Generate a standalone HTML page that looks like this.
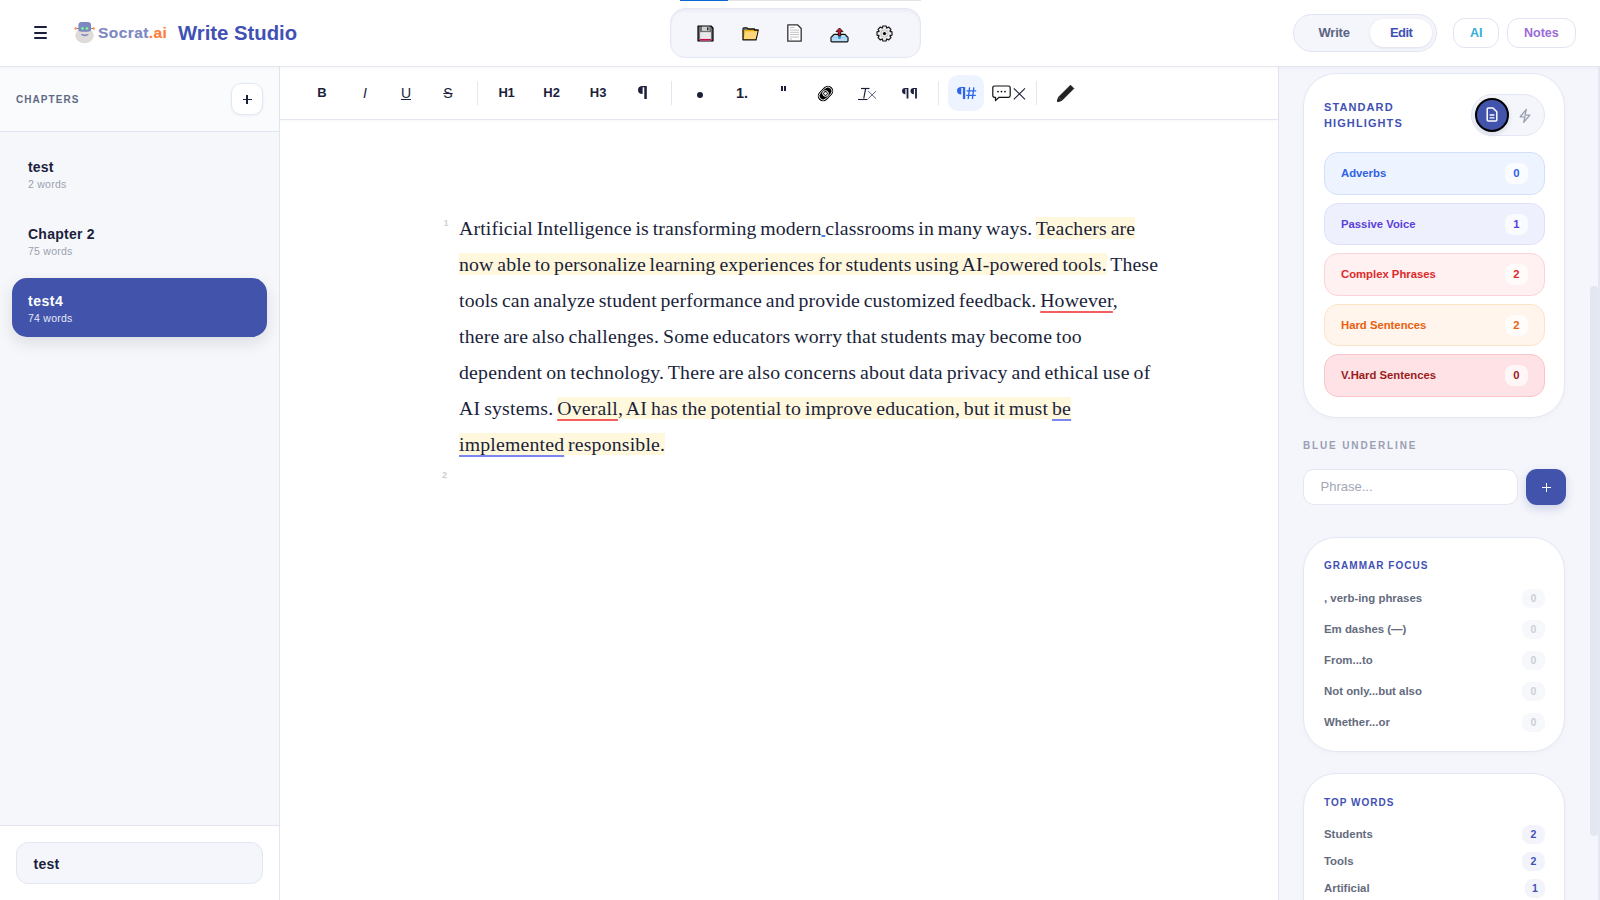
<!DOCTYPE html>
<html><head><meta charset="utf-8">
<style>
*{box-sizing:border-box;margin:0;padding:0}
html,body{width:1600px;height:900px;overflow:hidden;background:#fff;font-family:"Liberation Sans",sans-serif;color:#1b1f3b}
.a{position:absolute}
.t{position:absolute;white-space:nowrap;line-height:1}
/* header */
#hdr{position:absolute;left:0;top:0;width:1600px;height:67px;background:#fff;border-bottom:1px solid #e3e6f2;box-shadow:0 1px 4px rgba(40,40,30,.045);z-index:3}
/* sidebar */
#side{position:absolute;left:0;top:67px;width:280px;height:833px;background:#f6f7fb;border-right:1px solid #e3e6f2}
#sidehd{position:absolute;left:0;top:0;width:279px;height:65px;background:#fafbfd;border-bottom:1px solid #e3e6f2}
#sidebot{position:absolute;left:0;top:758px;width:279px;height:75px;background:#fff;border-top:1px solid #e3e6f2}
/* editor */
#tb{position:absolute;left:280px;top:67px;width:998px;height:53px;background:#fff;border-bottom:1px solid #e3e6f2;box-shadow:0 1px 3px rgba(40,40,20,.04);z-index:2}
.btn{position:absolute;top:7.8px;height:36px;width:36px;display:flex;align-items:center;justify-content:center;font-weight:bold;font-size:13px;color:#1b1f3b}
.sep{position:absolute;top:14px;width:1px;height:24px;background:#e3e6ef}
#doc{position:absolute;left:280px;top:120px;width:998px;height:780px;background:#fff}
.ln{position:absolute;left:179px;margin-top:-0.7px;word-spacing:-1.3px;white-space:nowrap;font-family:"Liberation Serif",serif;font-size:19.8px;line-height:22px;color:#1b1f3b}
.hl{background:#fff8dc}
.ur{text-decoration:underline;text-decoration-color:#f25f5f;text-decoration-thickness:2px;text-underline-offset:4px;text-decoration-skip-ink:none}
.ub{text-decoration:underline;text-decoration-color:#7b86f0;text-decoration-thickness:2px;text-underline-offset:4px;text-decoration-skip-ink:none}
/* right */
#rp{position:absolute;left:1278px;top:67px;width:322px;height:833px;background:#f5f6fb;border-left:1px solid #e3e6f2}
.card{position:absolute;background:#fff;border:1px solid #e3e6f3;border-radius:33px;box-shadow:0 2px 6px rgba(30,30,60,.025)}
.pill{position:absolute;left:20px;width:221px;height:43px;border-radius:14px;border:1px solid}
.pill .lb{position:absolute;left:16px;top:14px;font-size:11.3px;font-weight:bold;line-height:13px;white-space:nowrap}
.pill .ct{position:absolute;right:16px;top:10px;height:21px;min-width:23px;padding:0 6px;border-radius:8px;background:rgba(255,255,255,.7);font-size:11.3px;font-weight:bold;line-height:21px;text-align:center}
.ghd{position:absolute;left:20px;font-size:10px;font-weight:bold;letter-spacing:1.03px;color:#3f51b5;line-height:12px;white-space:nowrap}
.row{position:absolute;left:20px;width:221px;height:19px}
.row .lb{position:absolute;left:0;top:2px;font-size:11.4px;font-weight:bold;color:#646b7e;line-height:13px;white-space:nowrap}
.row .ct{position:absolute;right:0;top:-0.6px;height:19px;min-width:23px;border-radius:8px;background:#f7f8fb;font-size:10.5px;font-weight:bold;color:#cbcfd9;line-height:19px;text-align:center}
</style></head><body>

<div id="hdr">
  <!-- hamburger -->
  <div class="a" style="left:33.5px;top:26px;width:13px;height:2px;background:#1b1f3b;border-radius:1px"></div>
  <div class="a" style="left:33.5px;top:31.5px;width:13px;height:2px;background:#1b1f3b;border-radius:1px"></div>
  <div class="a" style="left:33.5px;top:37px;width:13px;height:2px;background:#1b1f3b;border-radius:1px"></div>
  <!-- robot logo -->
  <svg class="a" style="left:74px;top:20px" width="22" height="25" viewBox="0 0 22 25">
    <ellipse cx="10.5" cy="15.5" rx="9.3" ry="7.7" fill="#dedbd8"/>
    <path d="M4.4 4.8 Q4.4 1.9 7.6 1.9 L13.8 1.9 Q17 1.9 17 4.8 L17 9.6 Q17 11.8 13.5 11.8 L8 11.8 Q4.4 11.8 4.4 9.6 Z" fill="#7d87c2"/>
    <circle cx="8.5" cy="8.4" r="1.55" fill="#5ee08a"/>
    <circle cx="13" cy="8.4" r="1.55" fill="#5ee08a"/>
    <circle cx="8.5" cy="8.4" r="0.7" fill="#c8f7d6"/>
    <circle cx="13" cy="8.4" r="0.7" fill="#c8f7d6"/>
    <path d="M7.2 14.5 Q10.7 17.2 14.3 14.5 Q10.7 15.3 7.2 14.5Z" fill="#7d87c2" stroke="#7d87c2" stroke-width="0.8"/>
    <path d="M2.5 8.5 H4.5 M16.9 8.5 H19" stroke="#555a80" stroke-width="0.8"/>
    <circle cx="1.6" cy="8.5" r="1.2" fill="#ff8a4a"/>
    <circle cx="19.7" cy="8.5" r="1.2" fill="#ff8a4a"/>
  </svg>
  <div class="t" style="left:98px;top:25px;font-size:15.5px;font-weight:bold;color:#7d88c3;letter-spacing:0.42px;-webkit-text-stroke:0.15px #7d88c3">Socrat<span style="color:#ff7d3b;-webkit-text-stroke:0.15px #ff7d3b">.ai</span></div>
  <div class="t" style="left:178px;top:22.5px;font-size:20.3px;font-weight:bold;color:#3f51b5">Write Studio</div>
  <!-- progress bar -->
  <div class="a" style="left:680px;top:0;width:241px;height:1px;background:#e3e3e3"></div>
  <div class="a" style="left:680px;top:0;width:48px;height:1px;background:#0a66d0"></div>
  <!-- file pill -->
  <div class="a" style="left:670px;top:8px;width:251px;height:50px;background:#f5f6fb;border:1px solid #e3e6f3;border-radius:15px;box-shadow:inset 0 2px 3px rgba(30,40,90,.05)"></div>
  <!-- save -->
  <svg class="a" style="left:697px;top:25px" width="17" height="17" viewBox="0 0 17 17">
    <path d="M1 1 H14 L16 3 V16 H1 Z" fill="#707070" stroke="#000" stroke-width="1.2" stroke-linejoin="round"/>
    <rect x="5" y="1.7" width="7.4" height="4.2" fill="#d0d0d0"/><rect x="10" y="2.4" width="1.5" height="2.8" fill="#222"/>
    <rect x="3.1" y="7.2" width="10.8" height="8.3" fill="#eeeeee"/>
    <path d="M3.1 9.5 H13.9 M3.1 11.5 H13.9" stroke="#dadada" stroke-width="0.5"/>
    <rect x="3.1" y="13.9" width="10.8" height="1.7" fill="#c8104e"/>
  </svg>
  <!-- folder -->
  <svg class="a" style="left:742px;top:27px" width="17" height="14" viewBox="0 0 17 14">
    <path d="M1 2 Q1 1 2 1 L5 1 L6 2 L12.5 2 L12.5 3 L16.2 3 L14 12.8 L1 12.8 Z" fill="#f2a80f" stroke="#111" stroke-width="1.3" stroke-linejoin="round"/>
    <path d="M3 4.2 L15.6 4.2 L13.6 12 L1.8 12 Z" fill="#ffd77a"/>
    <rect x="1.6" y="1.6" width="3" height="1.4" fill="#3a7bbf"/>
  </svg>
  <!-- document -->
  <svg class="a" style="left:787px;top:24px" width="15" height="18" viewBox="0 0 15 18">
    <path d="M0.8 0.8 H10.5 L14.2 4.5 V17.2 H0.8 Z" fill="#fff" stroke="#333" stroke-width="1.3" stroke-linejoin="round"/>
    <g stroke="#bbb" stroke-width="0.9"><line x1="3" y1="3.5" x2="7.5" y2="3.5"/><line x1="3" y1="6" x2="12" y2="6"/><line x1="3" y1="8.3" x2="12" y2="8.3"/><line x1="3" y1="10.5" x2="12" y2="10.5"/><line x1="3" y1="13" x2="12" y2="13"/><line x1="3" y1="15" x2="5" y2="15"/></g>
  </svg>
  <!-- upload tray -->
  <svg class="a" style="left:829.5px;top:27px" width="19" height="16" viewBox="0 0 19 16">
    <path d="M1 10.5 L4 7.3 H15 L18 10.5 V13.8 Q18 14.8 17 14.8 H2 Q1 14.8 1 13.8 Z" fill="#b5dcf6" stroke="#111" stroke-width="1.2" stroke-linejoin="round"/>
    <path d="M1.6 10.6 H17.4" stroke="#8ec8ee" stroke-width="0.7"/>
    <circle cx="9.5" cy="10.4" r="1.5" fill="#3b96e0"/>
    <path d="M9.5 1 L13 4.6 L10.7 4.6 L10.7 9 L8.3 9 L8.3 4.6 L6 4.6 Z" fill="#e0102a" stroke="#111" stroke-width="0.9" stroke-linejoin="round"/>
  </svg>
  <!-- gear -->
  <svg class="a" style="left:876px;top:25px" width="17" height="17" viewBox="0 0 17 17">
    <path d="M13.99 6.35 L16.02 6.85 L16.02 10.15 L13.99 10.65 L13.91 10.86 L14.99 12.65 L12.65 14.99 L10.86 13.91 L10.65 13.99 L10.15 16.02 L6.85 16.02 L6.35 13.99 L6.14 13.91 L4.35 14.99 L2.01 12.65 L3.09 10.86 L3.01 10.65 L0.98 10.15 L0.98 6.85 L3.01 6.35 L3.09 6.14 L2.01 4.35 L4.35 2.01 L6.14 3.09 L6.35 3.01 L6.85 0.98 L10.15 0.98 L10.65 3.01 L10.86 3.09 L12.65 2.01 L14.99 4.35 L13.91 6.14 Z" fill="#e9e9e9" stroke="#111" stroke-width="1.1" stroke-linejoin="round"/>
    <circle cx="8.5" cy="8.5" r="3.7" fill="none" stroke="#b5b5b5" stroke-width="0.7"/>
    <circle cx="8.5" cy="8.5" r="2.6" fill="none" stroke="#d0d0d0" stroke-width="0.5"/>
    <circle cx="8.5" cy="8.5" r="1.6" fill="#000"/>
  </svg>
  <!-- write/edit toggle -->
  <div class="a" style="left:1293px;top:14px;width:144px;height:38px;background:#f5f6fb;border:1px solid #e0e4f3;border-radius:19px"></div>
  <div class="a" style="left:1370px;top:19px;width:62px;height:28px;background:#fff;border-radius:14px;box-shadow:0 1px 3px rgba(30,40,90,.10)"></div>
  <div class="t" style="left:1318.5px;top:26px;font-size:13px;font-weight:bold;color:#5a6582;letter-spacing:-.2px">Write</div>
  <div class="t" style="left:1390px;top:26px;font-size:13px;font-weight:bold;color:#3f51b5;letter-spacing:-.6px">Edit</div>
  <!-- AI / Notes -->
  <div class="a" style="left:1453px;top:18px;width:46px;height:30px;background:#fff;border:1px solid #e0e4f3;border-radius:12px"></div>
  <div class="t" style="left:1470px;top:27px;font-size:12.5px;font-weight:bold;color:#36aed6">AI</div>
  <div class="a" style="left:1507px;top:18px;width:69px;height:30px;background:#fff;border:1px solid #e0e4f3;border-radius:12px"></div>
  <div class="t" style="left:1524px;top:27px;font-size:12.5px;font-weight:bold;color:#9a6bd9">Notes</div>
</div>
<div id="side">
  <div id="sidehd">
    <div class="t" style="left:16px;top:28px;font-size:10px;font-weight:bold;letter-spacing:1.05px;color:#5f6a85">CHAPTERS</div>
    <div class="a" style="left:231px;top:16px;width:32px;height:32px;background:#fff;border:1px solid #e3e6f3;border-radius:10px;box-shadow:0 1px 3px rgba(30,40,90,.06)"></div>
    <div class="a" style="left:242.5px;top:31.5px;width:9px;height:1.3px;background:#1b1f3b"></div>
    <div class="a" style="left:246.4px;top:27.6px;width:1.3px;height:9px;background:#1b1f3b"></div>
  </div>
  <div class="t" style="left:28px;top:92.5px;font-size:14px;font-weight:bold;color:#1b1f3b;letter-spacing:.2px">test</div>
  <div class="t" style="left:28px;top:111.5px;font-size:10.5px;color:#9aa1b1;letter-spacing:.25px">2 words</div>
  <div class="t" style="left:28px;top:159.5px;font-size:14px;font-weight:bold;color:#1b1f3b;letter-spacing:.25px">Chapter 2</div>
  <div class="t" style="left:28px;top:178.5px;font-size:10.5px;color:#9aa1b1;letter-spacing:.25px">75 words</div>
  <div class="a" style="left:12px;top:211px;width:255px;height:59px;background:#4153aa;border-radius:15px;box-shadow:0 6px 16px rgba(20,20,30,.11)"></div>
  <div class="t" style="left:28px;top:226.5px;font-size:14px;font-weight:bold;color:#fff;letter-spacing:.5px">test4</div>
  <div class="t" style="left:28px;top:245.5px;font-size:10.5px;color:#e6e9f7;letter-spacing:.25px">74 words</div>
  <div id="sidebot">
    <div class="a" style="left:16px;top:16px;width:247px;height:42px;background:#f5f6fb;border:1px solid #e3e6f3;border-radius:12px"></div>
    <div class="t" style="left:33.5px;top:30.5px;font-size:14px;font-weight:bold;color:#1b1f3b;letter-spacing:.25px">test</div>
  </div>
</div>
<div id="tb">
  <div class="btn" style="left:24px">B</div>
  <div class="btn" style="left:67px;font-weight:normal;font-style:italic;font-size:14px">I</div>
  <div class="btn" style="left:108px;font-weight:normal;text-decoration:underline;font-size:14px">U</div>
  <div class="btn" style="left:150px;font-weight:normal;text-decoration:line-through;font-size:14px">S</div>
  <div class="sep" style="left:196.5px"></div>
  <div class="btn" style="left:206.5px;width:40px;letter-spacing:-0.3px">H1</div>
  <div class="btn" style="left:251.6px;width:40px">H2</div>
  <div class="btn" style="left:298.1px;width:40px">H3</div>
  <svg class="a" style="left:358px;top:19px" width="9" height="13" viewBox="0 0 9 13"><path d="M4.6 0 H8.8 V13 H6.3 V1.2 H4.6 V8 Q0 8 0 4 Q0 0 4.6 0 Z" fill="#1b1f3b"/></svg>
  <div class="sep" style="left:390.5px"></div>
  <div class="a" style="left:416.5px;top:24.5px;width:6px;height:6px;border-radius:50%;background:#1b1f3b"></div>
  <div class="t" style="left:456px;top:18.7px;font-size:14.5px;font-weight:bold;color:#1b1f3b">1.</div>
  <div class="a" style="left:500.8px;top:18.9px;width:2px;height:5.2px;background:#1b1f3b"></div><div class="a" style="left:504.4px;top:18.9px;width:2px;height:5.2px;background:#1b1f3b"></div>
  <!-- link -->
  <svg class="a" style="left:536.5px;top:17.5px;overflow:visible" width="17" height="17" viewBox="0 0 17 17">
    <g transform="rotate(-45 8.5 8.5)">
      <rect x="-0.2" y="3.2" width="17.4" height="10.6" rx="5.3" fill="#000"/>
      <rect x="1.1" y="4.5" width="14.8" height="8" rx="4" fill="none" stroke="#fff" stroke-width="0.9"/>
      <circle cx="8.5" cy="8.5" r="3.1" fill="#fff"/>
      <circle cx="8.5" cy="8.5" r="2.25" fill="#000"/>
      <circle cx="8.5" cy="8.5" r="1.4" fill="#fff"/>
    </g>
  </svg>
  <!-- Tx -->
  <svg class="a" style="left:577px;top:20px" width="20" height="14" viewBox="0 0 20 14">
    <path d="M4 1.5 H12.5" stroke="#1b1f3b" stroke-width="1.2"/>
    <path d="M8.6 1.5 L6.8 11.5" stroke="#1b1f3b" stroke-width="1.2"/>
    <path d="M1 12.5 H10.5" stroke="#1b1f3b" stroke-width="1.1"/>
    <path d="M11.2 4.2 L19 11.6 M19 4.2 L11.2 11.6" stroke="#4a5278" stroke-width="0.9"/>
  </svg>
  <svg class="a" style="left:621.8px;top:20.6px" width="16" height="11" viewBox="0 0 16 11"><path d="M3.4 0 H6.4 V10.4 H4.6 V1 H3.4 V6.2 Q0 6.2 0 3.1 Q0 0 3.4 0 Z" fill="#1b1f3b"/><path d="M11.9 0 H14.9 V10.4 H13.1 V1 H11.9 V6.2 Q8.5 6.2 8.5 3.1 Q8.5 0 11.9 0 Z" fill="#1b1f3b"/></svg>
  <div class="sep" style="left:657.5px"></div>
  <div class="a" style="left:668px;top:8px;width:36px;height:36px;border-radius:10px;background:#eef4ff"></div>
  <svg class="a" style="left:677px;top:19.7px" width="20" height="13" viewBox="0 0 20 13"><path d="M4.3 0 H8.2 V12 H5.9 V1.1 H4.3 V7.4 Q0 7.4 0 3.7 Q0 0 4.3 0 Z" fill="#2f66e8"/><path d="M12.6 0.3 L11.2 12 M16.8 0.3 L15.4 12 M9.6 3.9 H19.2 M9.2 8.3 H18.8" stroke="#2f66e8" stroke-width="1.35"/></svg>
  <!-- comment x -->
  <svg class="a" style="left:712px;top:18px" width="35" height="18" viewBox="0 0 35 18">
    <path d="M2.5 1 H16.5 Q18.2 1 18.2 2.7 V10.6 Q18.2 12.3 16.5 12.3 H7 L3.5 15.6 V12.3 H2.5 Q0.8 12.3 0.8 10.6 V2.7 Q0.8 1 2.5 1 Z" fill="#fff" stroke="#111" stroke-width="1.2" stroke-linejoin="round"/>
    <circle cx="6" cy="6.6" r="0.9" fill="#111"/><circle cx="9.5" cy="6.6" r="0.9" fill="#111"/><circle cx="13" cy="6.6" r="0.9" fill="#111"/>
    <path d="M21.8 3.4 L33 14.4 M33 3.4 L21.8 14.4" stroke="#1b1f3b" stroke-width="1.1"/>
  </svg>
  <div class="sep" style="left:756px"></div>
  <!-- pen -->
  <svg class="a" style="left:776px;top:17px" width="19" height="19" viewBox="0 0 19 19">
    <path d="M14.5 1.2 L17.8 4.5 L6 16.3 Q3 17.8 1.4 17.6 Q1.2 16 2.7 13 Z" fill="#222" stroke="#111" stroke-width="0.8" stroke-linejoin="round"/>
    <path d="M2.6 13.2 L5.8 16.4" stroke="#666" stroke-width="0.7"/>
  </svg>
</div>
<div id="doc">
  <div class="t" style="left:163.8px;top:99px;font-size:8.5px;font-weight:bold;color:#cfcfcf">1</div>
  <div class="ln" style="top:97.5px;letter-spacing:0.136px">Artificial Intelligence is transforming modern<span class="ub" style="text-decoration-color:#3f7ff0;text-decoration-thickness:1.5px;text-underline-offset:0px">&nbsp;</span>classrooms in many ways. <span class="hl">Teachers are</span></div>
  <div class="ln" style="top:133.5px;letter-spacing:0.148px"><span class="hl">now able to personalize learning experiences for students using AI-powered tools.</span> These</div>
  <div class="ln" style="top:169.5px;letter-spacing:0.135px">tools can analyze student performance and provide customized feedback. <span class="ur">However</span>,</div>
  <div class="ln" style="top:205.5px;letter-spacing:0.202px">there are also challenges. Some educators worry that students may become too</div>
  <div class="ln" style="top:241.5px;letter-spacing:0.222px">dependent on technology. There are also concerns about data privacy and ethical use of</div>
  <div class="ln" style="top:277.5px;letter-spacing:0.203px">AI systems. <span class="hl"><span class="ur">Overall</span>, AI has the potential to improve education, but it must <span class="ub">be</span></span></div>
  <div class="ln" style="top:313.5px;letter-spacing:0.175px"><span class="hl"><span class="ub">implemented</span> responsible.</span></div>
  <div class="t" style="left:162px;top:351px;font-size:9px;font-weight:bold;color:#cdcdcd">2</div>
</div>
<div id="rp">
  <div class="card" style="left:24px;top:6px;width:262px;height:345px">
    <div class="t" style="left:20px;top:25.3px;font-size:11px;font-weight:bold;letter-spacing:1.1px;color:#3f51b5;line-height:16px">STANDARD<br>HIGHLIGHTS</div>
    <div class="a" style="left:167px;top:20px;width:74px;height:42px;border-radius:21px;background:#f5f6fb;border:1px solid #e3e6f3"></div>
    <div class="a" style="left:171px;top:23.5px;width:34px;height:34px;border-radius:50%;background:#4153aa;border:2px solid #000;box-shadow:0 2px 5px rgba(30,40,90,.15)"></div>
    <svg class="a" style="left:182px;top:33px" width="12" height="15" viewBox="0 0 12 15">
      <path d="M1.2 2 Q1.2 1 2.2 1 H7 L10.8 4.8 V13 Q10.8 14 9.8 14 H2.2 Q1.2 14 1.2 13 Z" fill="none" stroke="#fff" stroke-width="1.5" stroke-linejoin="round"/>
      <path d="M3.6 8 H8.4 M3.6 10.8 H8.4" stroke="#fff" stroke-width="1.3"/>
    </svg>
    <svg class="a" style="left:213.5px;top:33.5px" width="14" height="16" viewBox="0 0 14 16">
      <path d="M8.3 1.4 L2.2 8.8 H7 L5.7 14.4 L11.8 7.1 H7 Z" fill="none" stroke="#9aa0b0" stroke-width="1.35" stroke-linejoin="round"/>
    </svg>
    <div class="pill" style="top:78px;height:43px;background:#eef4ff;border-color:#d3e0fb"><span class="lb" style="color:#2f62e6">Adverbs</span><span class="ct" style="color:#2f62e6">0</span></div>
    <div class="pill" style="top:129px;height:42px;background:#eef0fd;border-color:#dde2fa"><span class="lb" style="color:#5a3fd8">Passive Voice</span><span class="ct" style="color:#5a3fd8">1</span></div>
    <div class="pill" style="top:179px;height:43px;background:#fff0f2;border-color:#fbd3d8"><span class="lb" style="color:#dc2a2a">Complex Phrases</span><span class="ct" style="color:#dc2a2a">2</span></div>
    <div class="pill" style="top:230px;height:42px;background:#fff5ec;border-color:#fde3c6"><span class="lb" style="color:#e8600f">Hard Sentences</span><span class="ct" style="color:#e8600f">2</span></div>
    <div class="pill" style="top:280px;height:43px;background:#fee2e5;border-color:#f9c4ca"><span class="lb" style="color:#9b1c1c">V.Hard Sentences</span><span class="ct" style="color:#9b1c1c">0</span></div>
  </div>
  <div class="t" style="left:24px;top:374px;font-size:10px;font-weight:bold;letter-spacing:1.85px;color:#9aa0b3">BLUE UNDERLINE</div>
  <div class="a" style="left:24px;top:402px;width:215px;height:36px;background:#fff;border:1px solid #e3e6f3;border-radius:11px"></div>
  <div class="t" style="left:41.5px;top:413.2px;font-size:13px;color:#a2a7b8">Phrase...</div>
  <div class="a" style="left:247px;top:402px;width:40px;height:36px;background:#4153aa;border-radius:11px;box-shadow:0 4px 10px rgba(65,83,170,.22)"></div>
  <div class="a" style="left:263.2px;top:419.6px;width:8.6px;height:1.4px;background:#fff"></div>
  <div class="a" style="left:266.8px;top:416px;width:1.4px;height:8.6px;background:#fff"></div>
  <div class="card" style="left:24px;top:470px;width:262px;height:215px">
    <div class="ghd" style="top:22px">GRAMMAR FOCUS</div>
    <div class="row" style="top:51.5px"><span class="lb">, verb-ing phrases</span><span class="ct">0</span></div>
    <div class="row" style="top:82.5px"><span class="lb">Em dashes (—)</span><span class="ct">0</span></div>
    <div class="row" style="top:113.5px"><span class="lb">From...to</span><span class="ct">0</span></div>
    <div class="row" style="top:144.5px"><span class="lb">Not only...but also</span><span class="ct">0</span></div>
    <div class="row" style="top:175.5px"><span class="lb">Whether...or</span><span class="ct">0</span></div>
  </div>
  <div class="card" style="left:24px;top:706px;width:262px;height:240px">
    <div class="ghd" style="top:22.5px">TOP WORDS</div>
    <div class="row" style="top:51.5px"><span class="lb">Students</span><span class="ct" style="background:#f3f4fb;color:#3f51b5">2</span></div>
    <div class="row" style="top:78.5px"><span class="lb">Tools</span><span class="ct" style="background:#f3f4fb;color:#3f51b5">2</span></div>
    <div class="row" style="top:105.5px"><span class="lb">Artificial</span><span class="ct" style="background:#f3f4fb;color:#3f51b5;min-width:20px">1</span></div>
  </div>
  <div class="a" style="left:311px;top:219px;width:8px;height:550px;border-radius:4px;background:#e2e7f0"></div>
  <div class="a" style="left:319px;top:0;width:2px;height:833px;background:#e4e8f4"></div>
</div>

</body></html>
